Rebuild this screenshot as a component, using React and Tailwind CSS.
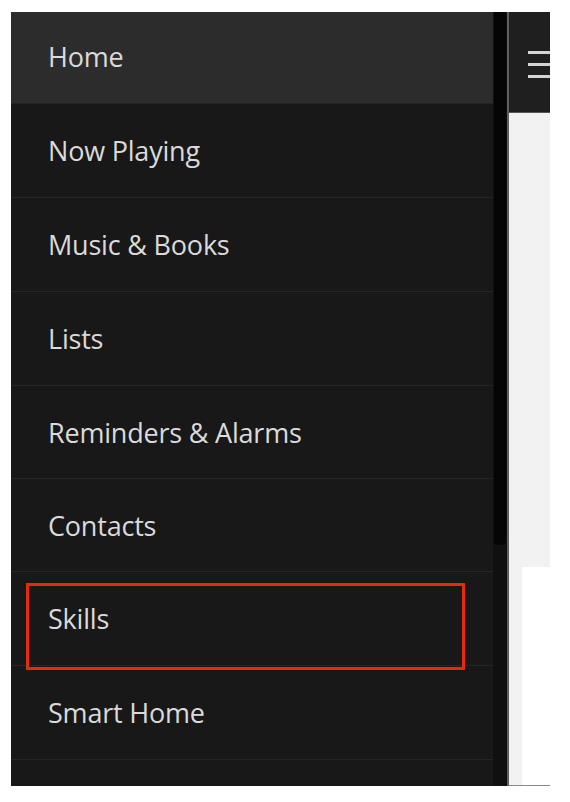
const items = [
  { label: 'Now Playing', h: 'h-[94px]' },
  { label: 'Music & Books', h: 'h-[94px]' },
  { label: 'Lists', h: 'h-[94px]' },
  { label: 'Reminders & Alarms', h: 'h-[93px]' },
  { label: 'Contacts', h: 'h-[93px]' },
  { label: 'Skills', h: 'h-[94px]' },
  { label: 'Smart Home', h: 'h-[94px]' },
]

function NavRow({ label, h, marked }) {
  return (
    <div className={`relative ${h} shrink-0 flex items-center pl-[37px] border-b border-[#252525]`}>
      <span className="text-[27px] text-[#dadada] leading-none tracking-[-0.2px]">{label}</span>
      {marked && (
        <div className="absolute left-[15px] top-[11px] w-[439px] h-[87px] border-[3px] border-[#e52a0e]" />
      )}
    </div>
  )
}

export default function App() {
  return (
    <div
      className="w-[570px] h-[802px] bg-white pt-[12px] pl-[11px] overflow-hidden"
      style={{ fontFamily: '"Open Sans", "Noto Sans", sans-serif' }}
    >
      <div className="flex h-[774px] w-[539px]">
        <nav className="w-[482px] bg-[#181818] flex flex-col overflow-hidden">
          <div className="h-[92px] shrink-0 flex items-center pl-[37px] pb-[3px] bg-[#2c2c2c] border-b border-[#222]">
            <span className="text-[27px] text-[#dadada] leading-none tracking-[-0.2px]">Home</span>
          </div>
          {items.map((it) => (
            <NavRow key={it.label} label={it.label} h={it.h} marked={it.label === 'Skills'} />
          ))}
        </nav>

        <div className="w-[14px] bg-[#101010] flex flex-col">
          <div className="h-[533px] mx-[1px] bg-[#050505] rounded-b-sm" />
        </div>
        <div className="w-[2px] bg-[#5e5e5e]" />

        <div className="w-[41px] flex flex-col border-b border-[#8a8a8a]">
          <div className="h-[101px] bg-[#1f1f1f] border-b border-[#555] flex flex-col justify-center gap-[9px] pl-[19px] pt-[4px]">
            <div className="h-[3px] bg-[#d4d4d4]" />
            <div className="h-[3px] bg-[#d4d4d4]" />
            <div className="h-[3px] bg-[#d4d4d4]" />
          </div>
          <div className="h-[454px] bg-[#f2f2f2]" />
          <div className="flex-1 flex">
            <div className="w-[13px] bg-[#f2f2f2]" />
            <div className="flex-1 bg-white" />
          </div>
        </div>
      </div>
    </div>
  )
}
